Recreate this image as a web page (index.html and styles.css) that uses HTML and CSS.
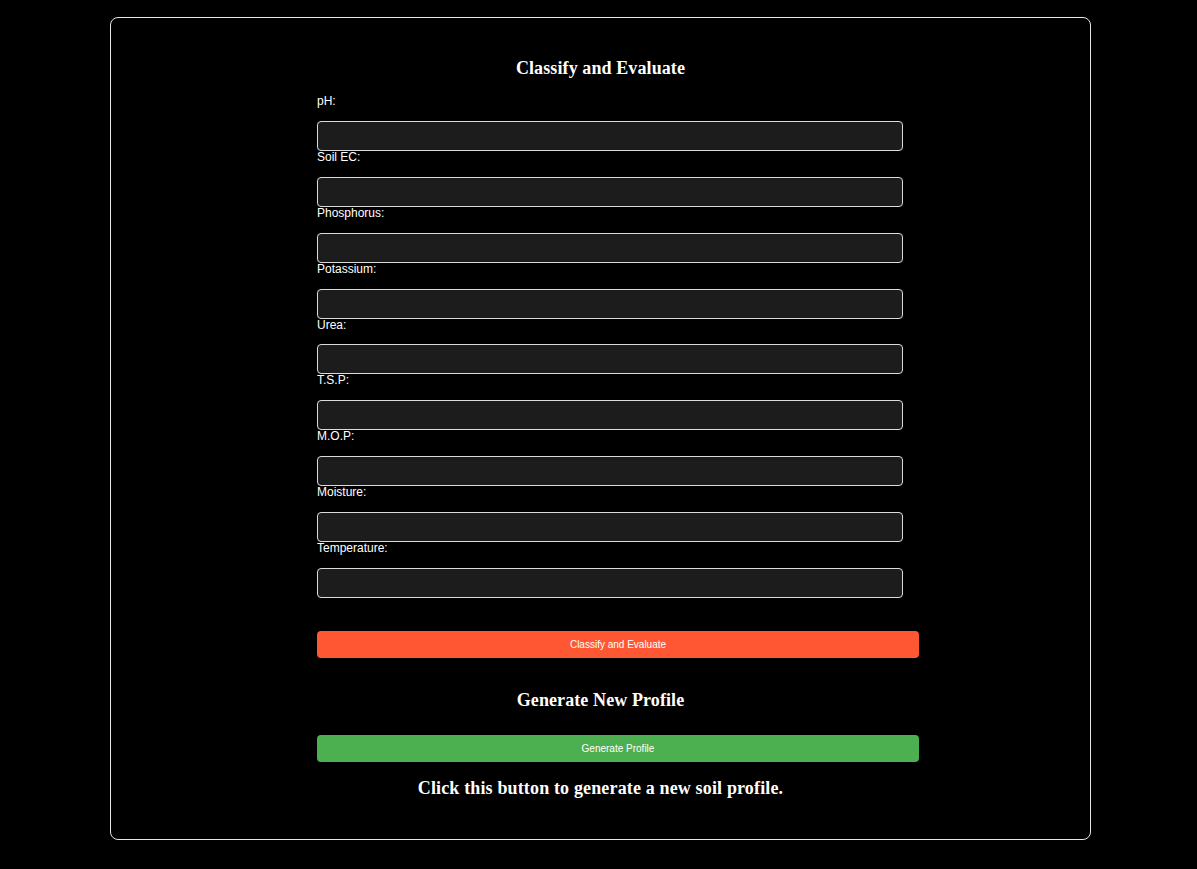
FILE: index.html
```html
<!DOCTYPE html>
<html>
<head>
<meta charset="utf-8">
<link rel="stylesheet" href="styles.css">
</head>
<body>
<div class="card">
  <h2 class="title">Classify and Evaluate</h2>
  <form class="form">
    <label class="label">pH:</label>
    <input class="field" type="text">
    <label class="label">Soil EC:</label>
    <input class="field" type="text">
    <label class="label">Phosphorus:</label>
    <input class="field" type="text">
    <label class="label">Potassium:</label>
    <input class="field" type="text">
    <label class="label">Urea:</label>
    <input class="field" type="text">
    <label class="label">T.S.P:</label>
    <input class="field" type="text">
    <label class="label">M.O.P:</label>
    <input class="field" type="text">
    <label class="label">Moisture:</label>
    <input class="field" type="text">
    <label class="label">Temperature:</label>
    <input class="field" type="text">
    <button class="btn btn-orange" type="button">Classify and Evaluate</button>
  </form>
  <h2 class="title title-gen">Generate New Profile</h2>
  <div class="form">
    <button class="btn btn-green" type="button">Generate Profile</button>
  </div>
  <p class="note">Click this button to generate a new soil profile.</p>
</div>
</body>
</html>
```

FILE: styles.css
```css
html, body {
  margin: 0;
  padding: 0;
  background: #000;
}
body {
  font-family: "Liberation Sans", Arial, sans-serif;
  color: #fff;
  padding-top: 17px;
  padding-bottom: 29px;
}
.card {
  box-sizing: border-box;
  width: 981px;
  margin-left: 110px;
  border: 1px solid #e6e6e6;
  border-radius: 8px;
  padding: 40px 0 41px 0;
}
.title {
  margin: 0;
  font-family: "Liberation Serif", "Times New Roman", serif;
  font-weight: bold;
  font-size: 18px;
  line-height: 20px;
  letter-spacing: 0.1px;
  text-align: center;
  color: #fff;
}
.form {
  width: 602px;
  margin-left: 206px;
  display: flex;
  flex-direction: column;
  align-items: flex-start;
}
form.form {
  margin-top: 17px;
}
.label {
  display: block;
  font-size: 12px;
  line-height: 13.875px;
  color: #fff;
}
.field {
  box-sizing: border-box;
  margin: 12px 0 0 0;
  width: 586px;
  height: 30px;
  background: #1c1c1c;
  border: 1px solid #dcdcdc;
  border-radius: 4px;
  color: #fff;
  padding: 0 8px;
}
.btn {
  width: 602px;
  height: 27px;
  border: none;
  border-radius: 4px;
  color: #fff;
  font-family: "Liberation Sans", Arial, sans-serif;
  font-size: 10px;
  padding: 0;
}
.btn-orange {
  margin-top: 33px;
  background: #ff5733;
}
.btn-green {
  background: #4caf50;
}
.title-gen {
  margin-top: 32px;
  margin-bottom: 25px;
}
.note {
  margin: 16px 0 0 0;
  font-family: "Liberation Serif", "Times New Roman", serif;
  font-weight: bold;
  font-size: 18px;
  line-height: 20px;
  letter-spacing: 0.15px;
  text-align: center;
}
```
